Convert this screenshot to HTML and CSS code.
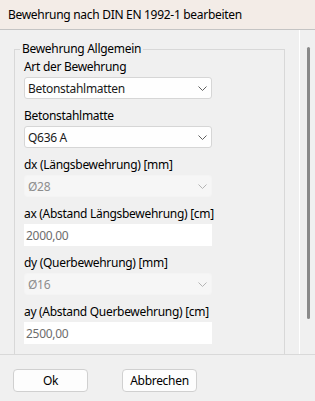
FILE: index.html
```html
<!DOCTYPE html>
<html lang="de">

<head>
    <meta charset="UTF-8">
    <meta name="viewport" content="width=device-width, initial-scale=1.0">
    <title>Bewehrung nach DIN EN 1992-1 bearbeiten</title>
    <link rel="stylesheet" href="styles.css">
</head>

<body>
    <div class="titlebar">Bewehrung nach DIN EN 1992-1 bearbeiten</div>

    <div class="main">
        <div class="scroll">
            <fieldset class="group">
                <legend>Bewehrung Allgemein</legend>

                <label class="field-label">Art der Bewehrung</label>
                <div class="combo">
                    <span>Betonstahlmatten</span>
                    <svg class="chev" width="9" height="5" viewBox="0 0 9 5"><path d="M0.5 0.5 L4.5 4.5 L8.5 0.5" /></svg>
                </div>

                <label class="field-label">Betonstahlmatte</label>
                <div class="combo">
                    <span>Q636 A</span>
                    <svg class="chev" width="9" height="5" viewBox="0 0 9 5"><path d="M0.5 0.5 L4.5 4.5 L8.5 0.5" /></svg>
                </div>

                <label class="field-label">dx (Längsbewehrung) [mm]</label>
                <div class="combo disabled">
                    <span>Ø28</span>
                    <svg class="chev" width="9" height="5" viewBox="0 0 9 5"><path d="M0.5 0.5 L4.5 4.5 L8.5 0.5" /></svg>
                </div>

                <label class="field-label">ax (Abstand Längsbewehrung) [cm]</label>
                <div class="textbox">2000,00</div>

                <label class="field-label">dy (Querbewehrung) [mm]</label>
                <div class="combo disabled">
                    <span>Ø16</span>
                    <svg class="chev" width="9" height="5" viewBox="0 0 9 5"><path d="M0.5 0.5 L4.5 4.5 L8.5 0.5" /></svg>
                </div>

                <label class="field-label">ay (Abstand Querbewehrung) [cm]</label>
                <div class="textbox">2500,00</div>
            </fieldset>
        </div>
        <div class="vbar">
            <div class="thumb"></div>
        </div>
    </div>

    <div class="footer">
        <button class="btn">Ok</button>
        <button class="btn">Abbrechen</button>
    </div>
</body>

</html>
```

FILE: styles.css
```css
body {
    margin: 0;
    width: 315px;
    height: 401px;
    overflow: hidden;
    background-color: #f0f0f0;
    color: #1a1a1a;
    font-family: "Noto Sans", "Liberation Sans", sans-serif;
    font-size: 12px;
    letter-spacing: -0.3px;
}

.titlebar {
    height: 29px;
    line-height: 29px;
    padding-left: 8px;
    background-color: #f3ece7;
    border-bottom: 1px solid #c4c4c4;
    color: #000;
}

.main {
    display: flex;
    height: 324px;
}

.scroll {
    width: 299px;
    overflow: hidden;
}

.vbar {
    width: 15px;
    border-left: 1px solid #ffffff;
    padding-top: 17px;
}

.thumb {
    width: 3px;
    height: 272px;
    margin-left: 7px;
    border-radius: 2px;
    background-color: #8a8a8a;
}

.group {
    margin: 11px 0 0 14px;
    width: 271px;
    box-sizing: border-box;
    padding: 2px 0 20px 9px;
    border: 1px solid #d8d8d8;
    border-radius: 0;
}

.group legend {
    margin-left: -4px;
    padding: 0 2px;
    line-height: 16px;
    color: #000;
}

.field-label {
    display: block;
    line-height: 16px;
    margin-bottom: 2px;
    color: #000;
}

.combo,
.textbox {
    width: 188px;
    height: 22px;
    box-sizing: border-box;
    margin-bottom: 9px;
    background-color: #fefefe;
    display: flex;
    align-items: center;
}

.combo {
    border: 1px solid #d6d6d6;
    border-radius: 3px;
    padding: 0 4px 0 3px;
    justify-content: space-between;
}

.chev {
    fill: none;
    stroke: #5f5f5f;
    stroke-width: 1;
}

.combo.disabled {
    background-color: #f6f6f6;
    border-color: #f4f4f4;
    color: #8d8d8d;
}

.combo.disabled .chev {
    stroke: #b4b4b4;
}

.textbox {
    padding-left: 2px;
    color: #6d6d6d;
    background-color: #ffffff;
}

.footer {
    height: 46px;
    border-top: 1px solid #d9d9d9;
    box-sizing: border-box;
    padding: 14px 0 0 13px;
    display: flex;
    gap: 34px;
}

.btn {
    width: 75px;
    height: 23px;
    border: 1px solid #d0d0d0;
    border-radius: 4px;
    background-color: #fdfdfd;
    font-family: inherit;
    font-size: 12px;
    letter-spacing: -0.3px;
    color: #000;
    padding: 0;
}
```
